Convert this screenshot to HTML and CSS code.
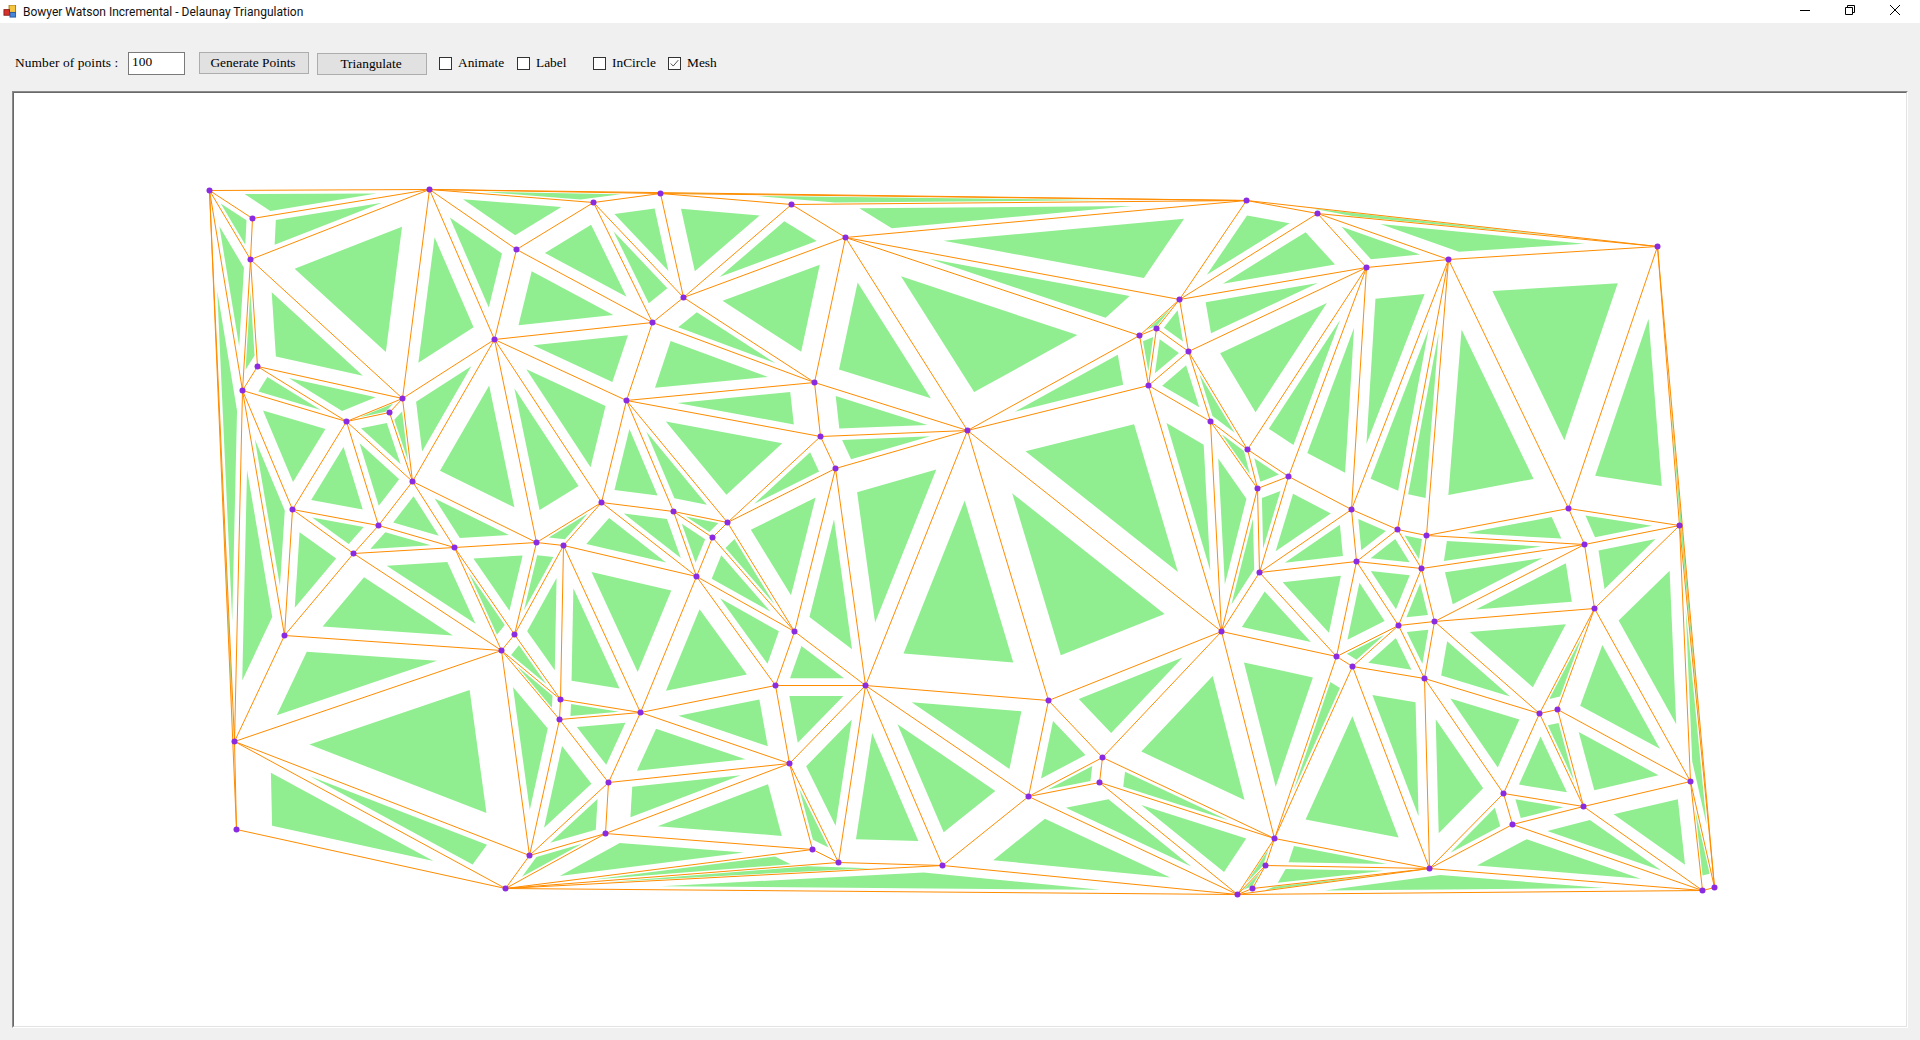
FILE: index.html
```html
<!DOCTYPE html>
<html lang="en">
<head>
<meta charset="utf-8">
<title>Bowyer Watson Incremental - Delaunay Triangulation</title>
<link rel="stylesheet" href="styles.css">
</head>
<body>
<header class="titlebar">
  <svg class="app-icon" viewBox="0 0 14 14" width="14" height="13">
    <rect x="6" y="0" width="7" height="8" fill="#f5c542" stroke="#9a7a1c" stroke-width="1"/>
    <rect x="0.5" y="5" width="6" height="6" fill="#d8322a" stroke="#8a1d18" stroke-width="1"/>
    <rect x="7" y="8" width="6" height="5" fill="#4a86d8" stroke="#2b5a9e" stroke-width="1"/>
  </svg>
  <span class="title">Bowyer Watson Incremental - Delaunay Triangulation</span>
  <div class="winctl">
    <svg class="ctl" viewBox="0 0 10 10" width="10" height="10"><path d="M0 5.5H10" /></svg>
    <svg class="ctl" viewBox="0 0 10 10" width="10" height="10"><path d="M0.5 2.5H7.5V9.5H0.5ZM2.5 2.5V0.5H9.5V7.5H7.5" /></svg>
    <svg class="ctl" viewBox="0 0 10 10" width="10" height="10"><path d="M0 0L10 10M10 0L0 10" /></svg>
  </div>
</header>
<section class="toolbar">
  <label class="lbl-count">Number of points :</label>
  <input class="count" type="text" value="100">
  <button class="btn btn-gen">Generate Points</button>
  <button class="btn btn-tri">Triangulate</button>
  <span class="check c-animate"><i class="box"></i>Animate</span>
  <span class="check c-label"><i class="box"></i>Label</span>
  <span class="check c-incircle"><i class="box"></i>InCircle</span>
  <span class="check c-mesh"><i class="box"><svg viewBox="0 0 13 13" width="11" height="11"><path d="M2 6.5L5 9.5L11 2.5" /></svg></i>Mesh</span>
</section>
<main class="panel">
  <div class="panel-inner">
    <svg id="canvas" class="canvas" viewBox="14 93 1892 933" width="1892" height="933"></svg>
  </div>
</main>
<script src="script.js"></script>
</body>
</html>
```
FILE: styles.css
```css
* { box-sizing: border-box; }
html, body { margin: 0; height: 1040px; overflow: hidden; background: #f0f0f0; }
body { font-family: "Liberation Serif", "Times New Roman", serif; font-size: 13.4px; color: #000; }

.titlebar { height: 23px; background: #fff; display: flex; align-items: center; padding-left: 3px; }
.app-icon { margin-right: 6px; flex: none; }
.title { font-family: Roboto, "Noto Sans", sans-serif; font-size: 12px; color: #111; }
.winctl { margin-left: auto; display: flex; gap: 35px; padding: 0 20px 3px 0; }
.ctl { fill: none; stroke: #000; stroke-width: 1; display: block; }

.toolbar { height: 68px; display: flex; align-items: center; padding: 12px 0 0 15px; }
.lbl-count { width: 113px; letter-spacing: 0.1px; }
.count { width: 57px; height: 23px; border: 1px solid #7a7a7a; background: #fff; font: inherit; padding: 0 3px 2px; margin-right: 14px; }
.btn { height: 22px; background: #e1e1e1; border: 1px solid #adadad; font: inherit; padding: 0 2px 0 0; }
.btn-gen { width: 110px; margin-right: 8px; }
.btn-tri { width: 110px; margin-right: 12px; margin-top: 2px; }
.check { display: flex; align-items: center; }
.box { width: 13px; height: 13px; border: 1px solid #333; background: #fff; margin-right: 6px; display: block; }
.box svg { display: block; fill: none; stroke: #333; stroke-width: 1; }
.c-animate { width: 78px; }
.c-label { width: 76px; }
.c-incircle { width: 75px; }

.panel { margin-left: 12px; width: 1896px; height: 937px; border: 1px solid; border-color: #8a8a8a #fff #fff #8a8a8a; }
.panel-inner { width: 100%; height: 100%; border: 1px solid; border-color: #696969 #e3e3e3 #e3e3e3 #696969; background: #fff; }
.canvas { display: block; }
.tri { fill: #90ee90; }
.edge { fill: none; stroke: #ff8c00; stroke-width: 1; }
.pt { fill: #8a2be2; }
```
FILE: script.js
```js
var P = [[209,190],[429,189],[252,218],[250,259],[660,193],[593,202],[516,249],[683,297],[652,322],[494,339],
[626,400],[257,366],[242,390],[402,398],[389,412],[346,421],[412,481],[292,509],[601,502],[673,511],
[378,525],[454,547],[536,542],[563,545],[353,553],[284,635],[514,634],[501,650],[560,699],[559,719],
[640,712],[234,741],[236,829],[608,782],[605,833],[529,855],[505,888],[791,204],[845,237],[814.6,382],
[820.4,436],[835.4,468],[967.5,430],[1139.6,335],[1156,328],[1179.6,299],[1188.6,351],[1148.6,385],[1210.4,421],[727.5,522],
[712.5,537],[696,576],[794.3,631],[775,685],[865.4,685],[789.6,763],[812.5,849],[838.6,862],[942.5,865],[1048.6,700],
[1028.6,796],[1102.5,757],[1099,782],[1221.4,631],[1237.5,894],[1246.7,200],[1317.3,213],[1366.3,267],[1448.3,259],[1657.3,246],
[1247.7,449],[1257.3,488],[1288.7,476],[1351.3,509.5],[1397.3,529],[1568.3,508],[1679.3,525],[1426.3,535],[1584.3,544],[1356.3,561],
[1421.3,568],[1259.7,572],[1398.3,625],[1434.3,621],[1594.3,608],[1336.3,656],[1352.3,666],[1424.3,678],[1539.3,713],[1557.3,709],
[1690.3,781],[1503.3,793],[1583.3,806],[1512.3,824],[1274.3,838],[1429.3,868],[1265.3,865],[1252.3,888],[1702.3,890],[1714.3,887]];
P = P.map(function (q) { return [Math.floor(q[0] + 0.2) + 0.5, Math.floor(q[1]) + 0.5]; });

function circum(a, b, c) {
  var d = 2 * (a[0] * (b[1] - c[1]) + b[0] * (c[1] - a[1]) + c[0] * (a[1] - b[1]));
  var A = a[0] * a[0] + a[1] * a[1], B = b[0] * b[0] + b[1] * b[1], C = c[0] * c[0] + c[1] * c[1];
  var x = (A * (b[1] - c[1]) + B * (c[1] - a[1]) + C * (a[1] - b[1])) / d;
  var y = (A * (c[0] - b[0]) + B * (a[0] - c[0]) + C * (b[0] - a[0])) / d;
  return { x: x, y: y, r2: (a[0] - x) * (a[0] - x) + (a[1] - y) * (a[1] - y) };
}

function triangulate(pts) {
  var all = pts.concat([[-3e6, -3e6], [6e6, -3e6], [900, 6e6]]);
  var n = pts.length, tris = [], i;
  function make(a, b, c) { return { v: [a, b, c], c: circum(all[a], all[b], all[c]) }; }
  tris.push(make(n, n + 1, n + 2));
  for (i = 0; i < n; i++) {
    var p = all[i], keep = [], edges = {};
    tris.forEach(function (t) {
      var dx = p[0] - t.c.x, dy = p[1] - t.c.y;
      if (dx * dx + dy * dy < t.c.r2) {
        [[0, 1], [1, 2], [2, 0]].forEach(function (e) {
          var a = t.v[e[0]], b = t.v[e[1]], k = Math.min(a, b) + "," + Math.max(a, b);
          edges[k] = edges[k] ? null : [a, b];
        });
      } else keep.push(t);
    });
    Object.keys(edges).forEach(function (k) {
      if (edges[k]) keep.push(make(edges[k][0], edges[k][1], i));
    });
    tris = keep;
  }
  return tris.filter(function (t) { return t.v.every(function (x) { return x < n; }); });
}

var NS = "http://www.w3.org/2000/svg", svg = document.getElementById("canvas");
function el(name, cls, attrs) {
  var e = document.createElementNS(NS, name);
  e.setAttribute("class", cls);
  Object.keys(attrs).forEach(function (k) { e.setAttribute(k, attrs[k]); });
  svg.appendChild(e);
}
var tris = triangulate(P), SCALE = 0.6, seen = {};
tris.forEach(function (t) {
  var a = P[t.v[0]], b = P[t.v[1]], c = P[t.v[2]];
  var cx = (a[0] + b[0] + c[0]) / 3, cy = (a[1] + b[1] + c[1]) / 3;
  el("polygon", "tri", { points: [a, b, c].map(function (q) {
    return (cx + (q[0] - cx) * SCALE).toFixed(2) + "," + (cy + (q[1] - cy) * SCALE).toFixed(2);
  }).join(" ") });
});
tris.forEach(function (t) {
  [[0, 1], [1, 2], [2, 0]].forEach(function (e) {
    var a = t.v[e[0]], b = t.v[e[1]], k = Math.min(a, b) + "," + Math.max(a, b);
    if (seen[k]) return;
    seen[k] = true;
    el("line", "edge", { x1: P[a][0], y1: P[a][1], x2: P[b][0], y2: P[b][1] });
  });
});
P.forEach(function (q) { el("circle", "pt", { cx: q[0], cy: q[1], r: 3 }); });
```
